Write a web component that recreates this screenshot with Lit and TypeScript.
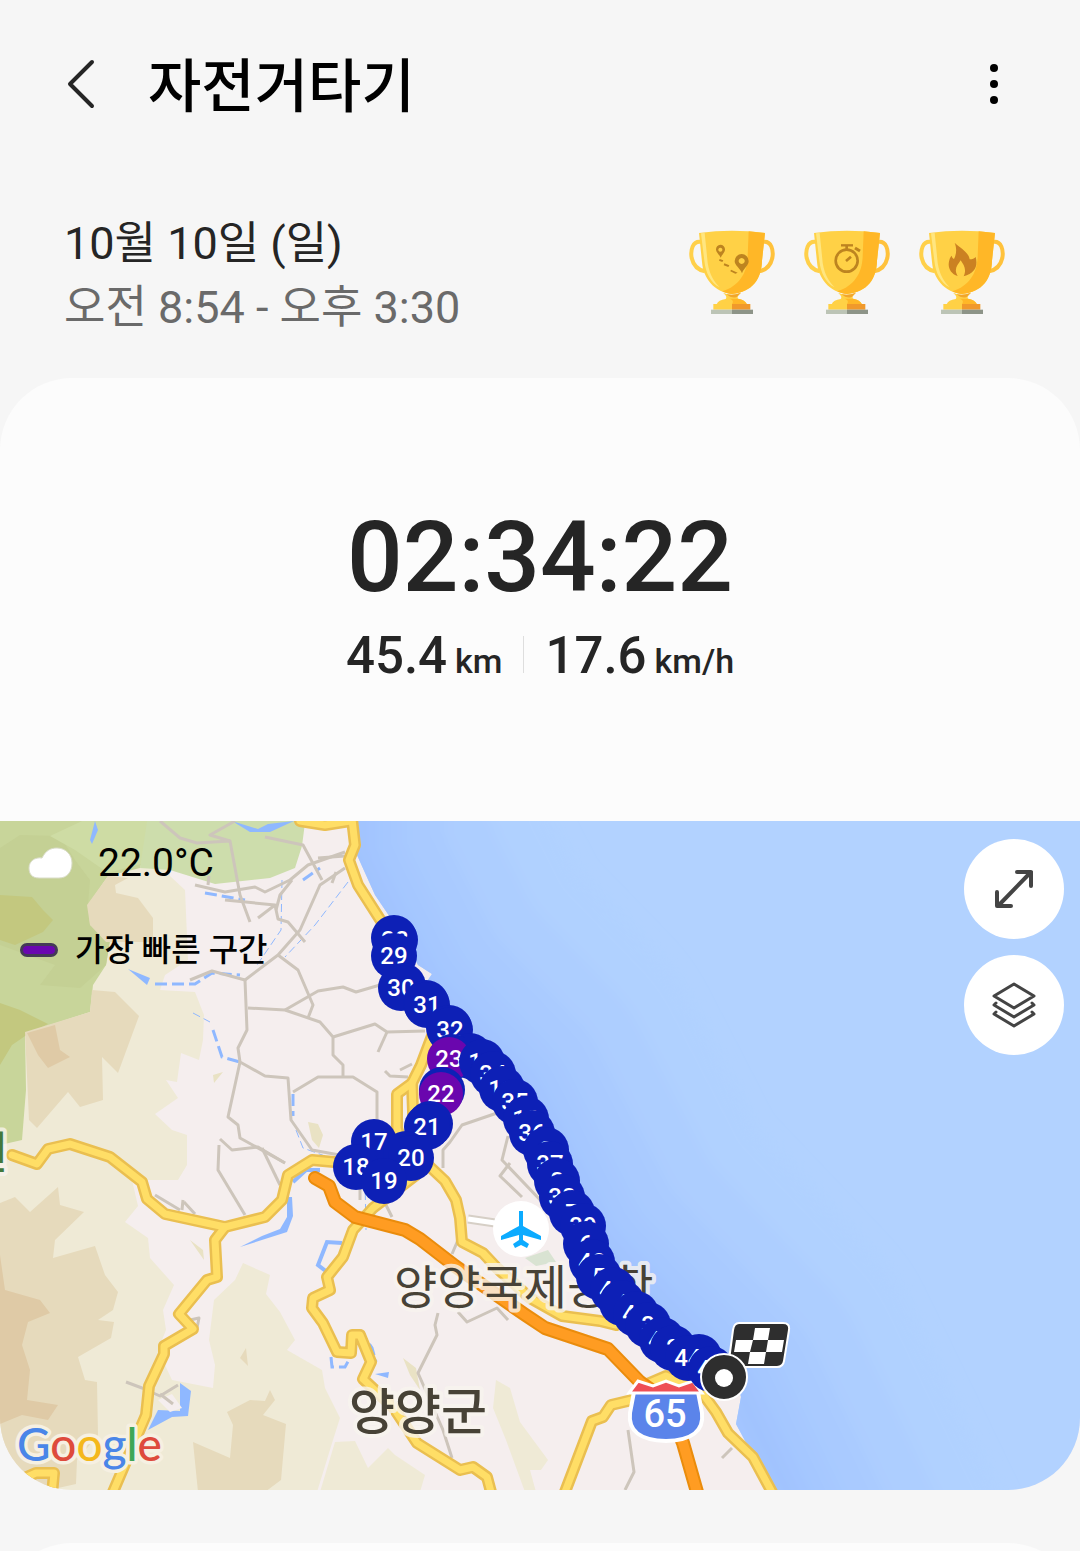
import { LitElement, html, css, svg } from "lit";
import { customElement, property } from "lit/decorators.js";

type Pin = { x: number; y: number; km: number; fast?: boolean };

// Kilometre marks along the route, in map units.
const PINS: Pin[] = [
  { km: 1, x: 699, y: 1357 }, { km: 2, x: 673, y: 1348 }, { km: 3, x: 648, y: 1325 },
  { km: 4, x: 622, y: 1303 }, { km: 5, x: 599, y: 1277 }, { km: 6, x: 586, y: 1244 },
  { km: 7, x: 572, y: 1213 }, { km: 8, x: 557, y: 1181 }, { km: 9, x: 546, y: 1150 },
  { km: 10, x: 526, y: 1119 }, { km: 11, x: 502, y: 1089 }, { km: 12, x: 482, y: 1062 },
  { km: 13, x: 452, y: 1057 }, { km: 14, x: 442, y: 1090 }, { km: 15, x: 430, y: 1124 },
  { km: 16, x: 406, y: 1154 }, { km: 17, x: 374, y: 1142 }, { km: 18, x: 356, y: 1167 },
  { km: 19, x: 384, y: 1181 }, { km: 20, x: 411, y: 1158 }, { km: 21, x: 427, y: 1127 },
  { km: 22, x: 441, y: 1094, fast: true }, { km: 23, x: 449, y: 1059, fast: true },
  { km: 24, x: 449, y: 1028 }, { km: 25, x: 426, y: 1003 }, { km: 26, x: 403, y: 986 },
  { km: 27, x: 394, y: 938 }, { km: 28, x: 395, y: 940 }, { km: 29, x: 394, y: 956 },
  { km: 30, x: 401, y: 988 }, { km: 31, x: 427, y: 1005 }, { km: 32, x: 450, y: 1030 },
  { km: 33, x: 470, y: 1056 }, { km: 34, x: 493, y: 1074 }, { km: 35, x: 515, y: 1102 },
  { km: 36, x: 532, y: 1133 }, { km: 37, x: 550, y: 1164 }, { km: 38, x: 562, y: 1197 },
  { km: 39, x: 583, y: 1226 }, { km: 40, x: 592, y: 1262 }, { km: 41, x: 613, y: 1290 },
  { km: 42, x: 636, y: 1314 }, { km: 43, x: 662, y: 1340 }, { km: 44, x: 688, y: 1358 },
  { km: 45, x: 711, y: 1369 },
];

const LOCAL_ROADS = [
  "M160 821L180 838L197 843L230 841L240 895L250 922", "M235 821L210 835L230 841",
  "M265 837L303 845L322 880", "M195 885L225 892L255 887L265 892L290 880L308 865L345 852",
  "M318 858L345 856", "M345 868L320 885L300 930L278 955L245 980L212 971L190 980",
  "M336 872L332 883", "M209 876L208 885", "M225 900L275 905L278 919L288 922L305 942",
  "M275 905L258 918", "M292 880L280 895L276 910", "M245 980L247 1030L238 1048L240 1062L265 1076L288 1078L291 1120L312 1150L345 1156",
  "M240 1062L235 1085L228 1117L238 1125L240 1138L285 1163", "M248 1008L285 1010L320 1022L333 1037L333 1055L343 1065L343 1077",
  "M278 955L298 970L313 1005L308 1018", "M285 1010L318 991L343 987L356 992L380 985",
  "M333 1037L375 1024L387 1032L425 1031", "M387 1032L378 1052", "M293 1092L318 1077L353 1077L377 1092L377 1125",
  "M220 1139L232 1150L258 1147L285 1163", "M219 1145L218 1170L245 1215", "M262 1148L280 1185",
  "M155 1195L180 1210", "M183 1200L182 1210M184 1202L195 1214", "M385 1071L390 1076L408 1077M400 1070L412 1064",
  "M500 1112L462 1125L450 1142L443 1150L443 1168", "M508 1136L502 1160L545 1205L580 1245",
  "M510 1163L500 1176L522 1197", "M455 1200L458 1240L452 1254", "M360 1182L360 1200M386 1205L392 1217",
  "M438 1313L435 1325L437 1335L418 1373L443 1430L452 1458", "M458 1312L467 1322L497 1308L508 1320",
  "M628 1430L634 1472L625 1490", "M722 1458L732 1448", "M126 1382L142 1388L160 1396L178 1385M160 1394L173 1404",
  "M190 1320L199 1318L197 1328",
];

const MAIN_ROADS = [
  "M12 1155L37 1164L48 1149L70 1144L110 1157L142 1182L147 1199L165 1214L225 1227L265 1217L282 1200L288 1175L312 1160L345 1163",
  "M225 1227L215 1240L217 1277L207 1280L179 1314L193 1329L164 1346L164 1354L149 1386L146 1415L113 1492",
  "M20 1480L36 1473L54 1473L52 1494",
  "M352 819L355 845L349 860L358 885L390 935L425 1000", "M300 821L325 825L350 821",
  "M432 1036L421 1065L412 1083L397 1094L397 1128L404 1150", "M412 1083L414 1140",
  "M428 1165L445 1181L456 1200L460 1218L462 1242L483 1253L497 1268L530 1298L562 1316L600 1321L616 1325",
  "M416 1175L373 1208L353 1230L343 1257L327 1277L330 1290L313 1298L312 1308L323 1323L337 1352L351 1353L352 1335L360 1335L371 1362L363 1379L393 1407L417 1443L460 1470L473 1467L487 1477L491 1492",
  "M565 1492L592 1421L603 1417L611 1405L632 1400L645 1385L666 1376L690 1386",
  "M700 1390L716 1412L728 1433L753 1457L773 1494",
];

const HIGHWAYS = [
  "M315 1178L329 1186L335 1202L355 1217L405 1230L420 1239L455 1266L524 1314L545 1328L608 1349L640 1382L665 1400L683 1443L697 1492",
];

const COAST = "M357 815L357 855L375 895L400 932L418 965L432 974L424 986L475 1040L515 1085L545 1150L580 1230L615 1282L665 1330L735 1372L741 1397L736 1424L750 1450L775 1495";

const trophyIcons = {
  distance: svg`<g fill="#bd8420"><path fill-rule="evenodd" d="M94 44a14 14 0 0 1 14 15c0 8-9 14-13 24c-4-10-14-16-14-24a14 14 0 0 1 13-15zm0 9a6 6 0 1 0 .1 0z"/>
    <path fill-rule="evenodd" d="M158 72a21 21 0 0 1 21 22c0 12-14 20-20 36c-6-16-22-24-22-36a21 21 0 0 1 21-22zm0 12a9 9 0 1 0 .1 0z"/>
    <path d="M92 87l11 4-3 5-10-4zM106 100l15 6-3 5-14-5zM126 119l20 9-7 3-15-7z"/></g>`,
  duration: svg`<g fill="none" stroke="#bd8420" stroke-width="8"><circle cx="128" cy="92" r="33"/><path d="M128 46v12M126 93l15-13" /><path d="M111 46h36" stroke-width="7"/><path d="M153 54l15 9" stroke-width="9"/></g>`,
  calories: svg`<path fill="#cb8122" d="M107 38c14 14 42 28 45 50c8 0 14-3 18-7c7 26-1 48-36 58c10-22 0-34-9-48c-9 14-22 26-9 47c-24-7-32-30-24-51c1-4 4-8 6-10c1 5 3 8 7 10c6-12 10-28 2-49z"/>`,
};

@customElement("award-trophy")
export class AwardTrophy extends LitElement {
  @property() kind: keyof typeof trophyIcons = "distance";
  @property() label = "";

  static styles = css`
    :host { display: block; width: 86px; }
    svg { display: block; width: 100%; height: auto; }
  `;

  render() {
    return html`<svg viewBox="0 0 258 252" role="img" aria-label=${this.label}>
      <g fill="none" stroke-width="12">
        <path stroke="#ffd04a" d="M38 36C10 30 4 62 8 84C14 110 32 121 48 124"/>
        <path stroke="#ffc23c" d="M220 36C248 30 254 62 250 84C244 110 226 121 210 124"/>
      </g>
      <path fill="#ffd146" d="M30 9Q129-5 228 9L219 92C218 146 190 186 129 192C76 188 42 142 39 96z"/>
      <path fill="#ffb727" d="M179 4L228 9L219 92C218 146 190 186 129 192C118 192 108 188 100 184C150 168 174 130 176 80z"/>
      <path fill="#ffe680" d="M36 10L47 9L56 98C62 136 76 156 92 172C64 158 50 128 46 92z"/>
      <path fill="#ffd146" d="M102 188Q129 200 156 188C146 196 144 202 148 207Q168 210 174 223H83Q88 210 110 207C114 202 112 196 102 188z"/>
      <path fill="#f2a62b" d="M112 192Q130 198 156 188L144 200Q130 208 112 192z"/>
      <path fill="#ffb727" d="M129 223C134 214 132 210 122 206H148Q168 210 174 223z"/>
      <path fill="#ffd146" d="M73 222h56v17H73z"/><path fill="#f0992b" d="M129 222h55v17h-55z"/>
      <path fill="#bcc4b6" d="M66 239h63v13H66z"/><path fill="#8d9488" d="M129 239h63v13h-63z"/>
      ${trophyIcons[this.kind]}
    </svg>`;
  }
}

@customElement("route-map")
export class RouteMap extends LitElement {
  static styles = css`
    :host { display: block; position: relative; font-family: Roboto, "Noto Sans CJK KR", sans-serif; }
    .canvas { display: block; width: 100%; height: auto; }
    .local { fill: none; stroke: #cdc5bb; stroke-width: 3; stroke-linejoin: round; }
    .main-edge, .main-fill, .high-edge, .high-fill { fill: none; stroke-linejoin: round; stroke-linecap: round; }
    .main-edge { stroke: #eabf50; stroke-width: 12; }
    .main-fill { stroke: #ffde66; stroke-width: 7; }
    .high-edge { stroke: #ea8c0c; stroke-width: 14; }
    .high-fill { stroke: #ff9c22; stroke-width: 10; }
    .water-line { fill: none; stroke: #8fb8ff; }
    .pin-text { fill: #fff; font-size: 24px; font-weight: 500; text-anchor: middle; }
    .place { fill: #474236; paint-order: stroke; stroke: #f8f4ee; stroke-opacity: 0.8; stroke-width: 8px; stroke-linejoin: round; }
    .town { font-size: 50px; font-weight: 500; }
    .airport { font-size: 47px; font-weight: 400; }
    .park { font-size: 44px; font-weight: 500; fill: #43783c; text-anchor: end; }
    .shield-text { fill: #fff; font-size: 38px; font-weight: 500; text-anchor: middle; }
    .brand { font-family: Lato, "Open Sans", sans-serif; font-size: 46px; font-weight: 500; paint-order: stroke; stroke: #f6f0e2; stroke-width: 7px; stroke-linejoin: round; }
    .overlay { position: absolute; top: 18px; left: 20px; display: flex; flex-direction: column; gap: 40px; }
    .row { display: flex; align-items: center; color: #000; }
    .weather { gap: 24px; font-size: 39px; line-height: 48px; padding-left: 7px; }
    .weather svg { width: 47px; height: 34px; }
    .fastest { gap: 17px; font-size: 32px; line-height: 46px; font-weight: 500; }
    .swatch { width: 32px; height: 8px; border: 3px solid #443a56; border-radius: 7px; background: #6a06b0; }
    .tools { position: absolute; top: 18px; right: 16px; display: flex; flex-direction: column; gap: 16px; }
    .tool { width: 100px; height: 100px; padding: 0; border: 0; border-radius: 50%; background: #fff; display: grid; place-items: center; cursor: pointer; }
    .tool svg { width: 48px; height: 48px; fill: none; stroke: #444; stroke-width: 4; stroke-linejoin: round; stroke-linecap: round; }
    .tool .thin { stroke-width: 3; }
  `;

  private terrain() {
    return svg`
      <path fill="#f5eeee" d="M0 815H1080V1495H0z"/>
      <path fill="#efead6" d="M0 815H170V876L185 890L188 960L165 975L160 990L195 992L204 1015L203 1040L199 1060L181 1053L177 1082L166 1080L178 1098L155 1114L172 1130L187 1135V1165L178 1180L132 1180L138 1206L125 1222L148 1238L150 1258L174 1285L163 1310L166 1330L158 1350L172 1380L213 1388L215 1365L209 1340L214 1300L235 1280L243 1263L270 1275L266 1294L280 1312L295 1340L287 1350L322 1370L325 1388L340 1418L333 1440L317 1492H0z"/>
      <path fill="#efead6" d="M320 1492L335 1442L355 1441L368 1468L388 1448L395 1455L425 1475L420 1492zM496 1380L510 1388L520 1422L548 1460L541 1470L530 1470L536 1492H525L506 1440L493 1408z"/>
      <path fill="#e9e2c4" d="M308 1122L318 1124L323 1135L319 1148L312 1140zM213 1075L223 1072L214 1083zM403 1358L416 1368L420 1390L410 1375zM190 1240L203 1250L204 1260z"/>
      <path fill="#c8d59a" d="M0 815H150L148 840L140 868L108 876L88 905L90 925L110 940L106 965L93 985L90 1012L25 1033L26 1090L22 1140L0 1145z"/>
      <path fill="#c4d094" d="M0 848L20 835L60 836L75 860L90 880L88 905L90 925L110 940L106 965L80 988L40 985L55 965L0 945z"/>
      <path fill="#cedca4" d="M95 815H148V862L108 873L75 850L50 836z"/>
      <path fill="#cdddac" d="M148 815H306L302 846L295 868L270 878L215 884L170 870L140 868z"/>
      <path fill="#c3c87f" d="M0 895L32 897L43 910L53 920L43 932L15 945L0 940zM0 1003L20 1010L48 1024L28 1034L12 1045L0 1065z"/>
      <path fill="#e6dabc" d="M108 876L128 878L115 885L116 893L138 898L153 918L153 942L106 942L90 925L87 905zM25 1032L90 1012L92 990L115 992L139 1016L118 1073L102 1057L103 1100L80 1107L68 1092L37 1128L29 1120zM0 1203L15 1197L30 1212L58 1187L60 1205L84 1212L55 1240L53 1258L95 1246L105 1275L118 1292L113 1310L98 1320L114 1322L111 1338L78 1357L85 1380L97 1382L98 1435L77 1460L76 1484L40 1492H0zM227 1412L250 1400L265 1401L270 1390L275 1400L263 1415L286 1424L281 1480L265 1492H198L193 1442L230 1458L233 1425zM246 1348L248 1366L240 1358z"/>
      <path fill="#dfcaa6" d="M27 1033L55 1025L60 1050L70 1057L48 1068L38 1055zM0 1255L5 1290L40 1300L50 1313L28 1322L22 1345L30 1370L27 1400L58 1405L48 1420L22 1415L0 1424z"/>
      <path fill="#d9e3d2" d="M525 1258L548 1250L556 1262L536 1266z"/>
      <g fill="#8fb8ff">
        <path d="M232 821L258 829L268 824L294 821L270 832L250 832zM95 821L98 830L92 844L90 840zM128 969L150 978L147 985z"/>
        <path d="M180 1383L191 1391L188 1416L172 1417L148 1430L158 1410L180 1411z"/>
        <path d="M287 1197H292L293 1216L287 1232L240 1247L262 1236L280 1229L287 1217zM375 1374L389 1372L388 1378z"/>
      </g>
      <path fill="#f5eeee" d="M158 1400L172 1394L182 1408L170 1412z"/>
      <path class="water-line" stroke-width="4" d="M342 1243L327 1242L318 1265L327 1272M293 1182L306 1170L320 1170"/>
      <path class="water-line" stroke-width="3" stroke-dasharray="12 5" d="M155 984L195 984L212 973L240 975M205 893L245 900M303 880L320 868M213 1030L222 1057L240 1062M293 1094V1116M331 1357L332 1367L345 1367L350 1358M360 1330L372 1348L376 1362"/>
      <path class="water-line" stroke-width="1" stroke-dasharray="8 4" d="M348 882L315 925L285 957M282 880L281 930L255 968M296 1130L303 1148L325 1156M365 1180L366 1230M193 1013L210 1022"/>`;
  }

  private roads() {
    return svg`
      ${LOCAL_ROADS.map((d) => svg`<path class="local" d=${d}/>`)}
      <path d="M468 1219L502 1224" stroke="#d6cfc6" stroke-width="9"/><path d="M468 1219L502 1224" stroke="#fff" stroke-width="5"/>
      ${MAIN_ROADS.map((d) => svg`<path class="main-edge" d=${d}/>`)}
      ${MAIN_ROADS.map((d) => svg`<path class="main-fill" d=${d}/>`)}
      ${HIGHWAYS.map((d) => svg`<path class="high-edge" d=${d}/><path class="high-fill" d=${d}/>`)}`;
  }

  private sea() {
    const bands: [number, string][] = [[380, "#b0d1ff"], [270, "#adceff"], [170, "#a9caff"], [90, "#a5c7ff"], [30, "#a1c3fe"]];
    return svg`
      <clipPath id="sea"><path d="${COAST}H1080V815z"/></clipPath>
      <filter id="soft" filterUnits="userSpaceOnUse" x="0" y="700" width="1200" height="900"><feGaussianBlur stdDeviation="9"/></filter>
      <g clip-path="url(#sea)">
        <path fill="#b2d2ff" d="M300 815H1080V1495H300z"/>
        <g filter="url(#soft)">${bands.map(([w, c]) => svg`<path d="M357 600V855L424 986L520 1085L600 1240L735 1382L840 1600" fill="none" stroke-linejoin="round" stroke=${c} stroke-width=${w}/>`)}</g>
      </g>`;
  }

  private places() {
    return svg`
      <text class="place park" x="8" y="1169">공원</text>
      <text class="place airport" x="394" y="1304">양양국제공항</text>
      <text class="place town" x="349" y="1430">양양군</text>
      <circle cx="521" cy="1229" r="28" fill="#fff"/>
      <path fill="#0cabff" d="M519 1211h4v15l18 10v4l-18-5v5l6 4-2 4-6-3-6 3-2-4 6-4v-5l-18 5v-4l18-10z"/>
      <path fill="#5b84ea" stroke="#fff" stroke-width="4" d="M634 1392H698L702 1413Q705 1440 666 1441Q627 1440 630 1413z"/>
      <path fill="#ee4f56" stroke="#fff" stroke-width="3" d="M629 1393L638 1381L653 1386L666 1381L679 1386L693 1381L702 1393z"/>
      <text class="shield-text" x="665" y="1427">65</text>`;
  }

  private route() {
    const pins = [...PINS].sort((a, b) => a.y - b.y);
    return svg`
      <path fill="none" stroke="#0d20b6" stroke-width="20" stroke-linejoin="round" d="M374 1142L384 1160L411 1156M356 1167L384 1181L411 1158"/>
      ${pins.map((p) => svg`<circle cx=${p.x} cy=${p.y} r=${p.fast ? 22 : 23} fill=${p.fast ? "#6a06ae" : "#0d20b6"}/>
        <text class="pin-text" x=${p.x} y=${p.y + 8}>${p.km}</text>`)}
      <path fill="#2e2e2e" stroke="#fff" stroke-width="2" d="M739 1323H783Q790 1323 789 1330L784 1361Q783 1367 777 1367H735Q728 1367 729 1360L733 1330Q734 1323 739 1323z"/>
      <path fill="#fff" d="M755 1328H770L768 1340H753zM736 1340H753L750 1352H734zM768 1340H784L782 1352H766zM750 1352H766L764 1364H748z"/>
      <circle cx="724" cy="1377" r="23" fill="#2e2e2e" stroke="#fff" stroke-width="2"/>
      <circle cx="724" cy="1378" r="9" fill="#fff"/>`;
  }

  render() {
    return html`
      <svg class="canvas" viewBox="0 821 1080 669" role="img" aria-label="양양군 자전거 경로 지도">
        ${this.terrain()} ${this.sea()} ${this.roads()} ${this.places()} ${this.route()}
        <text class="brand" x="17" y="1461"><tspan fill="#4a86e8">G</tspan><tspan fill="#de4a3c">o</tspan><tspan fill="#f4b81c">o</tspan><tspan fill="#4a86e8">g</tspan><tspan fill="#3fa656">l</tspan><tspan fill="#de4a3c">e</tspan></text>
      </svg>
      <div class="overlay">
        <div class="row weather">
          <svg viewBox="0 0 47 34" role="img" aria-label="흐림"><path fill="#fff" stroke="#d9dcc8" d="M12 32C5 32 2 28 2 22C2 15 8 11 15 12C19 4 24 2 30 2C39 2 45 9 45 17C45 26 40 32 32 32z"/></svg>
          <span>22.0°C</span>
        </div>
        <div class="row fastest"><span class="swatch"></span><span>가장 빠른 구간</span></div>
      </div>
      <div class="tools">
        <button class="tool" aria-label="지도 확대"><svg viewBox="0 0 48 48"><path d="M8 41L41 7M27 7H41V21M7 27V41H21"/></svg></button>
        <button class="tool" aria-label="지도 유형"><svg class="thin" viewBox="0 0 48 48"><path d="M24 3L44 15L24 27L4 15zM6 22L4 24L24 36L44 24L42 22M6 31L4 33L24 45L44 33L42 31"/></svg></button>
      </div>`;
  }
}

@customElement("app-root")
export class AppRoot extends LitElement {
  static styles = css`
    :host { display: block; min-height: 100vh; background: #f6f6f6; color: #252525; font-family: Roboto, "Noto Sans CJK KR", sans-serif; }
    .bar { display: flex; align-items: center; height: 168px; padding: 0 62px 0 58px; }
    .icon-button { display: grid; place-items: center; width: 48px; height: 64px; padding: 0; border: 0; background: none; cursor: pointer; }
    .title { flex: 1; margin: 0; padding: 6px 0 0 42px; color: #000; font-size: 58px; line-height: 72px; font-weight: 500; }
    .summary { display: flex; justify-content: space-between; align-items: center; padding: 44px 75px 38px 64px; }
    .when { font-size: 45px; line-height: 64px; }
    .when p { margin: 0; }
    .time { color: #6a6a6a; }
    .awards { display: flex; gap: 29px; padding-bottom: 8px; }
    .card { border-radius: 72px; background: #fcfcfc; overflow: hidden; }
    .stats { display: flex; flex-direction: column; align-items: center; gap: 5px; padding: 120px 0 127px; }
    .duration { font-size: 98px; line-height: 120px; font-weight: 500; }
    .figures { display: flex; align-items: center; gap: 21px; font-weight: 500; line-height: 65px; }
    .figure { display: flex; align-items: baseline; gap: 8px; font-size: 51px; }
    .unit { font-size: 34px; }
    .divider { width: 1px; height: 37px; margin-bottom: 8px; background: #dedede; }
    .peek { height: 8px; margin-top: 53px; overflow: hidden; }
    .next { height: 160px; }
  `;

  render() {
    return html`
      <header class="bar">
        <button class="icon-button" aria-label="뒤로">
          <svg width="36" height="52" viewBox="0 0 36 52" fill="none" stroke="#252525" stroke-width="4" stroke-linecap="round" stroke-linejoin="round"><path d="M28 4L6 26L28 48"/></svg>
        </button>
        <h1 class="title">자전거타기</h1>
        <button class="icon-button" aria-label="더보기">
          <svg width="10" height="42" viewBox="0 0 10 42"><circle cx="5" cy="5" r="4"/><circle cx="5" cy="21" r="4"/><circle cx="5" cy="37" r="4"/></svg>
        </button>
      </header>
      <section class="summary">
        <div class="when">
          <p>10월 10일 (일)</p>
          <p class="time">오전 8:54 - 오후 3:30</p>
        </div>
        <div class="awards">
          <award-trophy kind="distance" label="최장 거리"></award-trophy>
          <award-trophy kind="duration" label="최장 시간"></award-trophy>
          <award-trophy kind="calories" label="최대 칼로리"></award-trophy>
        </div>
      </section>
      <main class="card">
        <section class="stats">
          <div class="duration">02:34:22</div>
          <div class="figures">
            <div class="figure">45.4<span class="unit">km</span></div>
            <span class="divider"></span>
            <div class="figure">17.6<span class="unit">km/h</span></div>
          </div>
        </section>
        <route-map></route-map>
      </main>
      <div class="peek"><div class="card next"></div></div>`;
  }
}
